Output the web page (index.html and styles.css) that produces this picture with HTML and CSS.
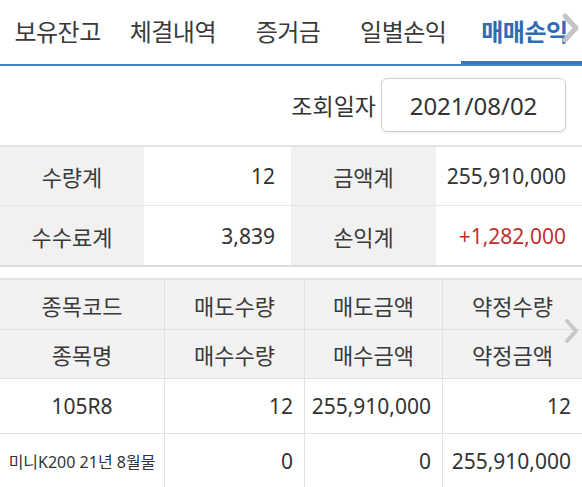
FILE: index.html
```html
<!DOCTYPE html>
<html lang="ko">
<head>
<meta charset="utf-8">
<link rel="stylesheet" href="styles.css">
</head>
<body>
<div class="page">
  <div class="tabbar">
    <div class="tab">보유잔고</div>
    <div class="tab">체결내역</div>
    <div class="tab">증거금</div>
    <div class="tab">일별손익</div>
    <div class="tab active">매매손익</div>
    <svg class="tab-more" width="22" height="34" viewBox="0 0 22 34"><path d="M5 5 L16 17 L5 29" fill="none" stroke="#c4c4c4" stroke-width="5" stroke-linecap="round" stroke-linejoin="round"/></svg>
  </div>

  <div class="query">
    <span class="query-label">조회일자</span>
    <div class="date-box">2021/08/02</div>
  </div>

  <div class="summary">
    <div class="s-label">수량계</div>
    <div class="s-value">12</div>
    <div class="s-label">금액계</div>
    <div class="s-value">255,910,000</div>
    <div class="s-label last">수수료계</div>
    <div class="s-value last">3,839</div>
    <div class="s-label last">손익계</div>
    <div class="s-value last red">+1,282,000</div>
  </div>

  <div class="grid-wrap">
    <div class="grid">
      <div class="h">종목코드</div>
      <div class="h">매도수량</div>
      <div class="h">매도금액</div>
      <div class="h">약정수량</div>
      <div class="h">종목명</div>
      <div class="h">매수수량</div>
      <div class="h">매수금액</div>
      <div class="h">약정금액</div>

      <div class="c center">105R8</div>
      <div class="c">12</div>
      <div class="c">255,910,000</div>
      <div class="c">12</div>
      <div class="c center small">미니K200 21년 8월물</div>
      <div class="c">0</div>
      <div class="c">0</div>
      <div class="c">255,910,000</div>
    </div>
    <svg class="grid-more" width="16" height="26" viewBox="0 0 16 26"><path d="M3 3 L12 13 L3 23" fill="none" stroke="#c8c8c8" stroke-width="4" stroke-linecap="round" stroke-linejoin="round"/></svg>
  </div>
</div>
</body>
</html>
```

FILE: styles.css
```css
* { box-sizing: border-box; }
html, body { margin: 0; padding: 0; background: #fff; }
body {
  font-family: "Noto Sans", "Noto Sans CJK KR", sans-serif;
  color: #333;
  width: 582px;
  height: 487px;
  overflow: hidden;
}
.page { width: 582px; }

.tabbar {
  position: relative;
  display: flex;
  height: 66px;
  border-bottom: 2px solid #4a82c6;
}
.tab {
  flex: 1 1 0;
  display: flex;
  align-items: center;
  justify-content: center;
  padding-bottom: 4px;
  font-size: 24px;
  color: #3a3a3a;
  letter-spacing: -0.5px;
}
.tab.active {
  color: #2e6cb4;
  font-weight: 700;
  box-shadow: inset 0 -3px 0 #3a76c0;
  padding-left: 6px;
}
.tab-more {
  position: absolute;
  right: 0;
  top: 11px;
}

.query {
  display: flex;
  justify-content: flex-end;
  align-items: center;
  gap: 5px;
  padding: 12px 16px 13px 0;
}
.query-label {
  font-size: 23px;
  color: #333;
}
.date-box {
  width: 185px;
  height: 54px;
  border: 1px solid #cfcfcf;
  border-radius: 6px;
  box-shadow: 0 1px 2px rgba(0,0,0,0.08);
  display: flex;
  align-items: center;
  justify-content: center;
  font-size: 24px;
  color: #333;
}

.summary {
  display: grid;
  grid-template-columns: 144px 147px 145px 146px;
  border-top: 2px solid #e2e2e2;
  border-bottom: 2px solid #dcdcdc;
}
.s-label, .s-value {
  height: 59px;
  display: flex;
  align-items: center;
  font-size: 21px;
  border-bottom: 1px solid #e6e6e6;
}
.s-label.last, .s-value.last { border-bottom: none; }
.s-label {
  background: #f1f1f1;
  justify-content: center;
  color: #3a3a3a;
  font-size: 22px;
}
.s-value {
  justify-content: flex-end;
  padding-right: 16px;
  color: #333;
}
.s-value.red { color: #c0322e; }

.grid-wrap {
  position: relative;
  margin-top: 11px;
}
.grid {
  display: grid;
  grid-template-columns: 165px 140px 138px 139px;
  grid-template-rows: 50px 49px 55px 55px;
  border-top: 2px solid #e2e2e2;
}
.h {
  background: #f2f2f2;
  display: flex;
  align-items: center;
  justify-content: center;
  font-size: 22px;
  color: #3a3a3a;
  border-bottom: 1px solid #e0e0e0;
  border-right: 1px solid #e0e0e0;
}
.c {
  display: flex;
  align-items: center;
  justify-content: flex-end;
  padding-right: 11px;
  font-size: 21px;
  color: #333;
  border-bottom: 1px solid #e3e3e3;
  border-right: 1px solid #e3e3e3;
}
.h:nth-child(4n), .c:nth-child(4n) { border-right: none; }
.c.center { justify-content: center; padding-right: 0; }
.c.small { font-size: 16px; }
.grid-more {
  position: absolute;
  right: 2px;
  top: 40px;
}
```
